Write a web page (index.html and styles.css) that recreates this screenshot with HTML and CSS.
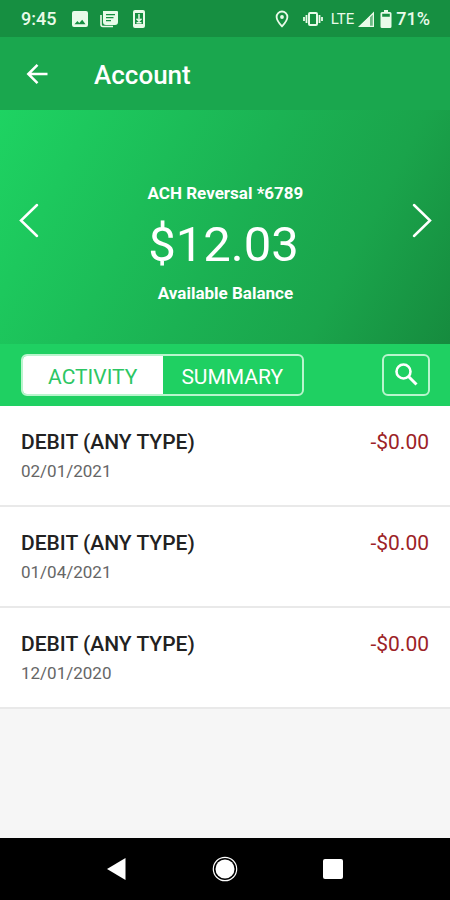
FILE: index.html
```html
<!DOCTYPE html>
<html lang="en">
<head>
<meta charset="utf-8">
<meta name="viewport" content="width=device-width, initial-scale=1">
<title>Account</title>
<link rel="stylesheet" href="styles.css">
</head>
<body>
<div class="status-bar">
  <div class="status-group">
    <span class="clock">9:45</span>
    <svg class="status-icon icon-picture" viewBox="0 0 16 16"><path fill="currentColor" fill-rule="evenodd" d="M2 0h12a2 2 0 0 1 2 2v12a2 2 0 0 1-2 2H2a2 2 0 0 1-2-2V2a2 2 0 0 1 2-2zM2.500 13.200h11L10.200 8.700 7.200 12 5.400 10z"/></svg>
    <svg class="status-icon" viewBox="0 0 18 18"><path fill="none" stroke="currentColor" stroke-width="1.600" d="M1 5v9.500a2 2 0 0 0 2 2h10"/><path fill="currentColor" fill-rule="evenodd" d="M3 1h14a1 1 0 0 1 1 1v10a3 3 0 0 1-3 3H6a3 3 0 0 1-3-3zM6 4v1.300h9V4zM6 7v1.300h7.500V7zM6 10v1.300h5V10z"/></svg>
    <svg class="status-icon" viewBox="0 0 18 18"><path fill="currentColor" fill-rule="evenodd" d="M5 0h8a2 2 0 0 1 2 2v14a2 2 0 0 1-2 2H5a2 2 0 0 1-2-2V2a2 2 0 0 1 2-2zM5 3v11h8V3z"/><path fill="none" stroke="currentColor" stroke-width="1.500" d="M9 4v7M6.500 8.700 9 11.200l2.500-2.500M6.500 12.700h5"/></svg>
  </div>
  <div class="status-group status-right">
    <svg class="status-icon icon-pin" viewBox="0 0 18 18"><path fill="none" stroke="currentColor" stroke-width="1.800" d="M9 1.500a5.400 5.400 0 0 0-5.400 5.400C3.600 10.500 9 16.300 9 16.300s5.400-5.800 5.400-9.400A5.400 5.400 0 0 0 9 1.500z"/><circle cx="9" cy="7" r="1.900" fill="currentColor"/></svg>
    <svg class="icon-vibrate" viewBox="0 0 20 16"><rect x="6" y="2" width="8" height="12" rx="1" fill="none" stroke="currentColor" stroke-width="2"/><path fill="none" stroke="currentColor" stroke-width="1.800" d="M3.500 4v8M16.500 4v8M1 6v4M19 6v4"/></svg>
    <span class="network">LTE</span>
    <svg class="icon-signal" viewBox="0 0 18 16"><path fill="currentColor" d="M0 16 12 5v11z"/><path fill="none" stroke="currentColor" stroke-width="1.200" d="M2 15.400 15.400 2v13.400z"/><path fill="currentColor" opacity=".4" d="M12 5l4-4v15h-4z"/></svg>
    <svg class="icon-battery" viewBox="0 0 12 18"><path fill="currentColor" fill-rule="evenodd" d="M4 0h4v2h2a1.500 1.500 0 0 1 1.500 1.500v13A1.500 1.500 0 0 1 10 18H2a1.500 1.500 0 0 1-1.500-1.500v-13A1.500 1.500 0 0 1 2 2h2zM2.200 3.700v3h7.600v-3z"/></svg>
    <span class="percent">71%</span>
  </div>
</div>

<header class="app-bar">
  <button class="icon-button back" type="button" aria-label="Back">
    <svg viewBox="0 0 24 24"><path fill="none" stroke="currentColor" stroke-width="2.500" d="M22.500 12H3M12.500 2.800 3.300 12l9.200 9.200"/></svg>
  </button>
  <h1 class="title">Account</h1>
</header>

<main class="content">
  <section class="balance">
    <button class="icon-button arrow" type="button" aria-label="Previous account">
      <svg viewBox="0 0 20 36"><path fill="none" stroke="currentColor" stroke-width="2.500" stroke-linecap="round" d="M18 3 2 18.500 18 34"/></svg>
    </button>
    <div class="balance-text">
      <p class="label">ACH Reversal *6789</p>
      <p class="amount">$12.03</p>
      <p class="label">Available Balance</p>
    </div>
    <button class="icon-button arrow" type="button" aria-label="Next account">
      <svg viewBox="0 0 20 36"><path fill="none" stroke="currentColor" stroke-width="2.500" stroke-linecap="round" d="M2 3 18 18.500 2 34"/></svg>
    </button>
  </section>

  <div class="toolbar">
    <div class="tabs">
      <button class="tab active" type="button">ACTIVITY</button>
      <button class="tab" type="button">SUMMARY</button>
    </div>
    <button class="search" type="button" aria-label="Search">
      <svg viewBox="0 0 24 24"><circle cx="9.500" cy="8.500" r="7" fill="none" stroke="currentColor" stroke-width="2.600"/><path fill="none" stroke="currentColor" stroke-width="3" d="m14.500 13.500 8 8"/></svg>
    </button>
  </div>

  <ul class="transactions">
    <li class="transaction">
      <div><h2 class="name">DEBIT (ANY TYPE)</h2><p class="date">02/01/2021</p></div>
      <span class="value">-$0.00</span>
    </li>
    <li class="transaction">
      <div><h2 class="name">DEBIT (ANY TYPE)</h2><p class="date">01/04/2021</p></div>
      <span class="value">-$0.00</span>
    </li>
    <li class="transaction">
      <div><h2 class="name">DEBIT (ANY TYPE)</h2><p class="date">12/01/2020</p></div>
      <span class="value">-$0.00</span>
    </li>
  </ul>
</main>

<nav class="system-nav">
  <button class="icon-button nav-button" type="button" aria-label="System back">
    <svg viewBox="0 0 26 26"><path fill="currentColor" d="M3 13 21.500 2v22z"/></svg>
  </button>
  <button class="icon-button nav-button" type="button" aria-label="Home">
    <svg viewBox="0 0 26 26"><circle cx="13" cy="13" r="9.500" fill="currentColor"/><circle cx="13" cy="13" r="11.700" fill="none" stroke="currentColor" stroke-width="1.200"/></svg>
  </button>
  <button class="icon-button nav-button" type="button" aria-label="Recent apps">
    <svg viewBox="0 0 26 26"><rect x="3" y="3" width="20" height="20" rx="2" fill="currentColor"/></svg>
  </button>
</nav>
</body>
</html>
```
FILE: styles.css
```css
* {
  box-sizing: border-box;
}

body {
  display: flex;
  flex-direction: column;
  min-height: 100vh;
  margin: 0;
  background: #f6f6f6;
  font-family: Roboto, sans-serif;
  color: #fff;
}

h1, h2, p, ul {
  margin: 0;
  padding: 0;
}

button {
  font-family: inherit;
  color: inherit;
}

svg {
  display: block;
}

.status-bar {
  display: flex;
  justify-content: space-between;
  align-items: center;
  height: 37px;
  padding: 0 20px 0 21px;
  background: #168f41;
  color: #e9fbe9;
}

.status-group {
  display: flex;
  align-items: center;
  gap: 12px;
}

.status-right {
  gap: 4px;
}

.clock, .percent {
  font-size: 18px;
  font-weight: 500;
  line-height: 20px;
}

.network {
  font-size: 15px;
  line-height: 20px;
}

.status-icon {
  width: 18px;
  height: 18px;
}

.icon-picture {
  width: 16px;
  height: 16px;
  margin-left: 4px;
}

.icon-pin {
  margin-right: 8px;
}

.icon-vibrate {
  width: 20px;
  height: 16px;
  margin-right: 4px;
}

.icon-signal {
  width: 18px;
  height: 16px;
}

.icon-battery {
  width: 12px;
  height: 18px;
}

.app-bar {
  display: flex;
  align-items: center;
  gap: 44px;
  height: 73px;
  padding: 0 24px;
  background: #1aa74e;
}

.icon-button {
  padding: 0;
  border: 0;
  background: none;
}

.back svg {
  width: 26px;
  height: 24px;
}

.title {
  padding-top: 2px;
  font-size: 26px;
  font-weight: 500;
  line-height: 32px;
}

.content {
  flex: 1;
}

.balance {
  display: flex;
  justify-content: space-between;
  align-items: center;
  padding: 68px 18px 36px 19px;
  background: linear-gradient(117deg, #1ed362 0%, #1bb253 50%, #1aa44b 75%, #168b3e 100%);
}

.arrow {
  align-self: flex-start;
  padding-top: 24px;
}

.arrow svg {
  width: 20px;
  height: 36px;
}

.balance-text {
  text-align: center;
}

.label {
  font-size: 17px;
  font-weight: 700;
  line-height: 30px;
}

.amount {
  padding: 4px 4px 0 0;
  font-size: 49px;
  line-height: 66px;
}

.toolbar {
  display: flex;
  justify-content: space-between;
  align-items: center;
  height: 62px;
  padding: 0 20px 0 21px;
  background: #1fd062;
}

.tabs {
  display: grid;
  grid-template-columns: 1fr 1fr;
  width: 283px;
  height: 42px;
  overflow: hidden;
  border: 2px solid #b9f5cd;
  border-radius: 6px;
}

.tab {
  padding: 4px 0 0;
  border: 0;
  background: none;
  font-size: 21px;
  line-height: 26px;
}

.tab.active {
  background: #fff;
  color: #2cc663;
}

.search {
  display: grid;
  place-items: center;
  width: 48px;
  height: 42px;
  padding: 0;
  border: 2px solid #b9f5cd;
  border-radius: 6px;
  background: none;
}

.search svg {
  width: 24px;
  height: 24px;
}

.transactions {
  list-style: none;
}

.transaction {
  display: flex;
  justify-content: space-between;
  align-items: flex-start;
  padding: 22px 21px;
  border-bottom: 2px solid #e9e9e9;
  background: #fff;
}

.name {
  font-size: 21px;
  font-weight: 500;
  line-height: 28px;
  color: #222;
}

.date {
  padding-top: 3px;
  font-size: 17px;
  line-height: 24px;
  color: #666;
}

.value {
  font-size: 21px;
  line-height: 28px;
  color: #9c2226;
}

.system-nav {
  display: flex;
  justify-content: center;
  align-items: center;
  gap: 82px;
  height: 62px;
  background: #000;
}

.nav-button svg {
  width: 26px;
  height: 26px;
}
```
